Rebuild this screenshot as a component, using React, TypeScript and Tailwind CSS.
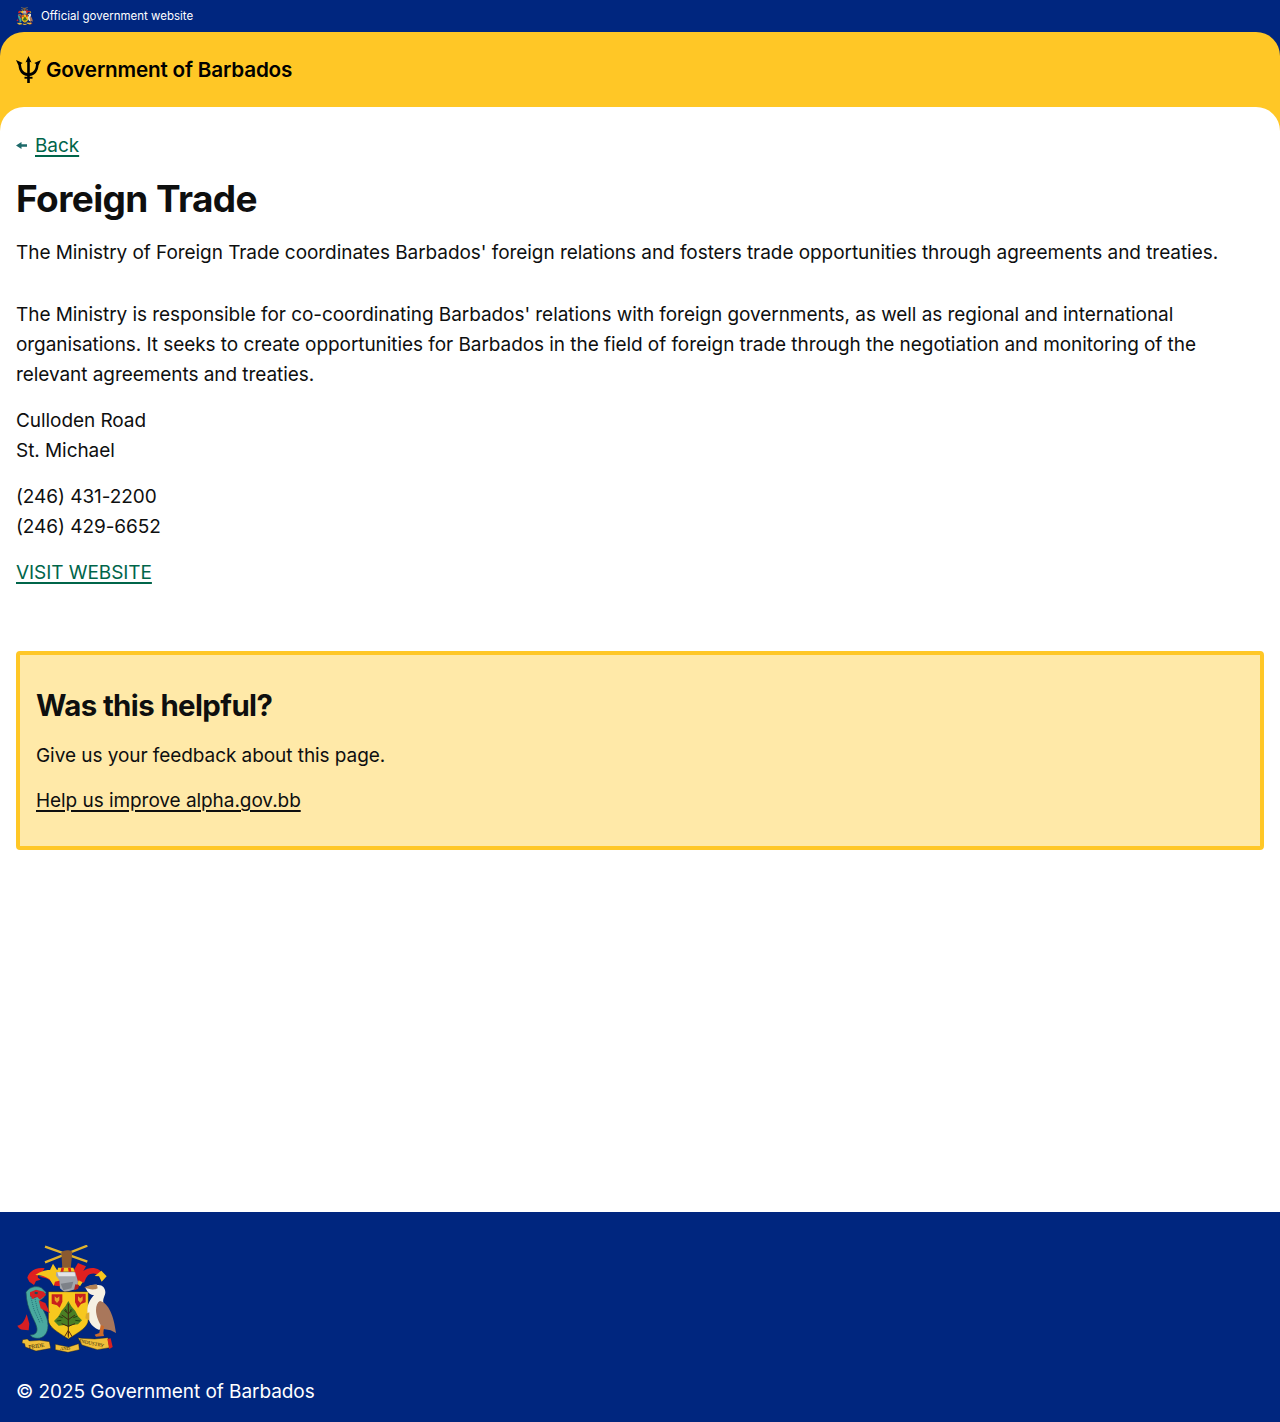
import React from "react";

// coordinates follow a 3x tracing of the crest, so the viewBox starts at 48,30
const CoatOfArms = ({ className, motto = true }: { className: string; motto?: boolean }) => (
  <svg viewBox="48 30 300 324" className={className} aria-hidden="true">
    {/* sugar cane and arm */}
    <path d="M135 35 262 80M262 32 135 82" stroke="#e0b32e" strokeWidth="7" />
    <path d="M184 52c8-8 24-8 33-2l-5 52h-25z" fill="#8a5a30" />
    {/* left mantling */}
    <path d="M82 128c4-18 26-32 52-28l-10 16c-10 2-12 6-10 12l8 6-14 4-6 12-14-10z" fill="#e0201f" />
    <path d="M116 126c18 0 36 6 48 26l18 2-4-20-30-18z" fill="#e0201f" />
    <path d="M106 120c14-10 30-15 44-15l9-19 12 19 10-3-3 23 5 11-18 4-4 13-12-20c-12-9-26-13-43-13z" fill="#f7c61c" />
    {/* right mantling */}
    <path d="M222 104l12-20 24 10-8 14c14-10 32-12 48-3l8 8-14 6c-10-6-20-4-28 2l-6 8-6 14-14-4-10 16-10-20z" fill="#e0201f" />
    <path d="M304 107l16 17-15 16-8-16-13-1z" fill="#f7c61c" />
    <path d="M236 136l12 6-8 12-9-6z" fill="#f7c61c" />
    {/* wreath and helmet */}
    <path d="M174 98h46l4 12h-52z" fill="#f7c61c" />
    <path d="M184 98h8l-2 12h-8zM204 98h8l2 12h-8z" fill="#d8201f" />
    <path d="M168 112h58l8 28-6 22-34 10-14-12-2-24-10-14z" fill="#a3a7ad" />
    <path d="M172 112h52l2 12h-50z" fill="#e4e5e7" />
    <path d="M182 146l38-6-6 20-24 6z" fill="#7d8188" />
    <path d="M226 148l12 2-4 12-12 4z" fill="#b3201f" />
    {/* shield */}
    <path d="M145 170h120v84c0 22-26 36-60 58-34-22-60-36-60-58z" fill="#f7c81e" stroke="#1b1b1b" strokeWidth="1.500" />
    <path d="M155 178h32v22l-8 18-8-7-16-5z" fill="#c9201c" />
    <path d="M225 176h32v26l-14 5-9 12-9-17z" fill="#c9201c" />
    <path d="M164 184l7 6 7-6v12l-7 8-7-8zM234 184l7 6 7-6v12l-7 8-7-8z" fill="#e9a428" />
    {/* tree */}
    <path d="M205 198 214 214 226 228 234 244 246 256 234 268 216 270 205 276 194 270 176 272 162 258 176 244 184 228 196 214z" fill="#4a7f24" />
    <path d="M176 244l12 4M232 244l-12 4M170 258l14-2M240 258l-14-2M196 222l4 8M214 222l-4 8" stroke="#1c4212" strokeWidth="3" />
    <path d="M205 206v96M205 254l-20-14M205 254l20-14M205 236l-12-10M205 236l12-10M205 274l-20-8M205 274l20-8" stroke="#3f2812" strokeWidth="3" fill="none" />
    <path d="M205 286l-12 20M205 286l12 20M205 290v18" stroke="#5b2a10" strokeWidth="3" />
    {/* dolphin */}
    <path d="M52 272c14-2 22-14 28-34l8 28-2 20-18-2c-6 0-12-4-16-12z" fill="#d61f22" />
    <path d="M78 172c8-14 28-22 46-14l14 14c-2 12-8 20-18 24 0 22 24 42 24 76 0 24-14 38-32 38-10 0-18-4-22-10 16 0 24-8 20-24-6-24-30-50-32-104z" fill="#49a99f" stroke="#1c4f58" strokeWidth="2" />
    <path d="M90 172l18-8 24 6 6 10-18 14-8-8-14 6-8-10z" fill="#d61f22" />
    <path d="M104 170l10 2-2 6-8-1z" fill="#1c4f58" />
    <path d="M116 196l20 8 14 30-14-6-14-8z" fill="#d61f22" />
    <path d="M92 184l10 40 18 40M104 186l8 36 16 40" stroke="#1c6470" strokeWidth="2.500" strokeDasharray="3 3" fill="none" />
    {/* pelican */}
    <path d="M256 158c12-6 26-10 36-8 14-2 24 8 24 22 0 10-8 18-6 30l-6 58 10 22-18 2c-22-8-34-28-34-58 0-18 8-32 20-46-10 0-18-6-26-22z" fill="#f6f1e3" />
    <path d="M253 157c12-5 26-9 38-8l2 11c-10 6-26 4-40-3z" fill="#b38254" />
    <path d="M300 198c26 6 42 46 48 96l-16-8-22-4c-14-18-22-40-22-56 0-14 4-24 12-28z" fill="#a9775b" />
    <path d="M302 270l-4 24-14 5 4 6 24-2-2-8 2-22z" fill="#cc6b2a" />
    <path d="M268 232l-10 4-2 14 12 6z" fill="#dcaa2e" />
    {/* motto scrolls */}
    <path d="M68 314l14-2 6 6 30-2 30 4 4 20-44 8-32-12-2-10-8-2z" fill="#f0bf3a" stroke="#2b2208" strokeWidth="1.200" />
    <path d="M166 328l40 8 30-10 2 18-34 8-38-8z" fill="#f0bf3a" stroke="#2b2208" strokeWidth="1.200" />
    <path d="M234 308l10 2 40 2 40-4 4 30-36 6-46-14z" fill="#f0bf3a" stroke="#2b2208" strokeWidth="1.200" />
    <path d="M322 312l10-2 6 26-10 6z" fill="#d8201f" />
    {motto && (
      <>
        <text x="86" y="342" fontSize="17" fill="#2b2208" fontFamily="Liberation Serif, serif" transform="rotate(-8 86 342)">PRIDE</text>
        <text x="180" y="346" fontSize="14" fill="#2b2208" fontFamily="Liberation Serif, serif">AND</text>
        <text x="238" y="322" fontSize="15" fill="#2b2208" fontFamily="Liberation Serif, serif" transform="rotate(12 238 322)">INDUSTRY</text>
      </>
    )}
  </svg>
);

const Trident = () => (
  <svg viewBox="0 0 25 27" className="h-[27px] w-[25px] shrink-0" aria-hidden="true">
    <path d="M12.500 0l3 6.500-1.700-.8V27h-2.600V5.700l-1.700.8z" fill="#000" />
    <path d="M8.500 20.800h8v1.900h-8z" fill="#000" />
    <path d="M0 4 6.700 7 5 8c.2 5 2 8.300 7 9.300V20C5.500 19.500 3 15 2.500 9.500z" fill="#000" />
    <path d="M25 4 18.300 7 20 8c-.2 5-2 8.300-7 9.300V20c6.500-.5 9-5 9.500-10.500z" fill="#000" />
  </svg>
);

const App = () => {
  return (
    <div className="flex min-h-screen flex-col bg-[#00267f] font-['Inter','Liberation_Sans',sans-serif] text-[19px] leading-[30px] tracking-[-0.06px] text-[#0e0f0f]">
      <div className="flex h-8 items-center gap-2 px-4 text-[11.5px] leading-4 tracking-normal text-white">
        <CoatOfArms className="h-[18px] w-[17px]" motto={false} />
        <span>Official government website</span>
      </div>
      <div className="flex flex-1 flex-col rounded-t-3xl bg-[#ffc726]">
        <header className="flex h-[75px] items-center gap-[5px] px-4">
          <Trident />
          <span className="text-[20.7px] leading-7 font-semibold tracking-[-0.2px] text-black">Government of Barbados</span>
        </header>
        <main className="flex-1 rounded-t-3xl bg-white px-4 pt-6 pb-[362px]">
          <a href="#" className="flex items-center gap-2 text-[#00654a] underline decoration-2 underline-offset-[3px]">
            <svg viewBox="0 0 11 7" className="mb-[2px] h-[7px] w-[11px]" aria-hidden="true">
              <path d="M0 3.500 5.500 0v2.300H11v2.400H5.500V7z" fill="#1d6a6a" />
            </svg>
            <span>Back</span>
          </a>
          <h1 className="mt-[13px] text-[37px] leading-[50px] font-bold tracking-[-0.6px]">Foreign Trade</h1>
          <p className="mt-[14px]">
            The Ministry of Foreign Trade coordinates Barbados' foreign relations and fosters trade opportunities through agreements and treaties.
          </p>
          <p className="mt-8">
            The Ministry is responsible for co-coordinating Barbados' relations with foreign governments, as well as regional and international organisations. It seeks to create opportunities for Barbados in the field of foreign trade through the negotiation and monitoring of the relevant agreements and treaties.
          </p>
          <p className="mt-4">
            Culloden Road
            <br />
            St. Michael
          </p>
          <p className="mt-4">
            (246) 431-2200
            <br />
            (246) 429-6652
          </p>
          <p className="mt-4">
            <a href="#" className="text-[#00654a] underline decoration-2 underline-offset-[3px]">VISIT WEBSITE</a>
          </p>
          <section className="mt-[63px] rounded border-4 border-[#ffc726] bg-[#ffe9a8] px-4 pt-[31px] pb-[30px]">
            <h2 className="text-[29.4px] leading-10 font-bold tracking-[-0.6px]">Was this helpful?</h2>
            <p className="mt-[15px]">Give us your feedback about this page.</p>
            <p className="mt-[15px]">
              <a href="#" className="underline decoration-2 underline-offset-[3px]">Help us improve alpha.gov.bb</a>
            </p>
          </section>
        </main>
      </div>
      <footer className="bg-[#00267f] px-4 pt-[33px] pb-[17px] text-white">
        <CoatOfArms className="h-[108px] w-[100px]" />
        <p className="mt-[24px]">© 2025 Government of Barbados</p>
      </footer>
    </div>
  );
};

export default App;
